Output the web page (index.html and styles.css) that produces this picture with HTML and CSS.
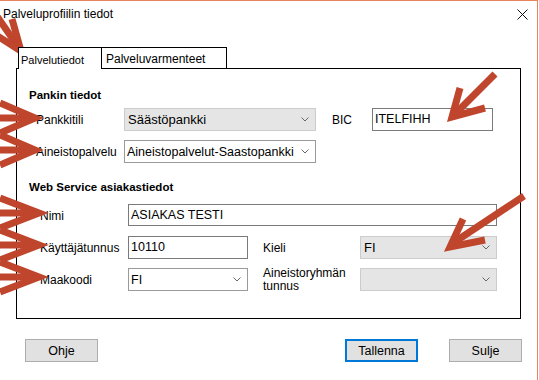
FILE: index.html
```html
<!DOCTYPE html>
<html lang="fi">
<head>
  <meta charset="UTF-8" />
  <meta name="viewport" content="width=device-width, initial-scale=1.0" />
  <title>Palveluprofiilin tiedot</title>
  <link rel="stylesheet" href="styles.css">
</head>
<body>
  <div class="window">
    <div class="titlebar">
      <span class="title">Palveluprofiilin tiedot</span>
      <svg class="close" width="11" height="11" viewBox="0 0 11 11">
        <path d="M0.5 0.5 L10.5 10.5 M10.5 0.5 L0.5 10.5" stroke="#111" stroke-width="1" fill="none" />
      </svg>
    </div>

    <div class="tabs">
      <div class="tab active">Palvelutiedot</div>
      <div class="tab">Palveluvarmenteet</div>
    </div>

    <div class="panel">
      <div class="heading">Pankin tiedot</div>
      <div class="bank-grid">
        <label>Pankkitili</label>
        <div class="combo disabled">
          <span>Säästöpankki</span>
          <svg class="chev" width="8" height="5" viewBox="0 0 8 5"><path d="M0.5 0.5 L4 4 L7.5 0.5" /></svg>
        </div>
        <label class="bic">BIC</label>
        <div class="field">ITELFIHH</div>

        <label>Aineistopalvelu</label>
        <div class="combo edit">
          <span>Aineistopalvelut-Saastopankki</span>
          <svg class="chev" width="8" height="5" viewBox="0 0 8 5"><path d="M0.5 0.5 L4 4 L7.5 0.5" /></svg>
        </div>
      </div>

      <div class="heading second">Web Service asiakastiedot</div>
      <div class="ws-grid">
        <label>Nimi</label>
        <div class="field wide">ASIAKAS TESTI</div>

        <label>Käyttäjätunnus</label>
        <div class="field">10110</div>
        <label class="side">Kieli</label>
        <div class="combo disabled">
          <span>FI</span>
          <svg class="chev" width="8" height="5" viewBox="0 0 8 5"><path d="M0.5 0.5 L4 4 L7.5 0.5" /></svg>
        </div>

        <label>Maakoodi</label>
        <div class="combo edit">
          <span>FI</span>
          <svg class="chev" width="8" height="5" viewBox="0 0 8 5"><path d="M0.5 0.5 L4 4 L7.5 0.5" /></svg>
        </div>
        <label class="side two-line">Aineistoryhmän<br>tunnus</label>
        <div class="combo disabled">
          <span></span>
          <svg class="chev" width="8" height="5" viewBox="0 0 8 5"><path d="M0.5 0.5 L4 4 L7.5 0.5" /></svg>
        </div>
      </div>
    </div>

    <div class="buttons">
      <button class="btn">Ohje</button>
      <button class="btn default">Tallenna</button>
      <button class="btn">Sulje</button>
    </div>

    <!-- annotation arrows drawn over the dialog -->
    <svg class="marks" width="539" height="380" viewBox="0 0 539 380">
      <g stroke="#c0452d" stroke-width="7" fill="none" stroke-linejoin="miter">
        <path d="M-6 12 L19 48" />
        <path d="M12 19 L21 51 L-4 35" />

        <path d="M495 74 L455 114" />
        <path d="M460 88 L452 117 L485 108" />

        <path d="M524 196 L453 243" />
        <path d="M463 219 L450 247 L485 240" />

        <path d="M-8 118 L31 118" />
        <path d="M0 103 L35 118 L0 133" />

        <path d="M-8 150 L31 150" />
        <path d="M0 135 L35 150 L0 165" />

        <path d="M-8 213 L35 213" />
        <path d="M0 198 L39 213 L0 228" />

        <path d="M-8 245 L35 245" />
        <path d="M0 230 L39 245 L0 260" />

        <path d="M-8 277 L35 277" />
        <path d="M0 262 L39 277 L0 292" />
      </g>
    </svg>
  </div>
</body>
</html>
```

FILE: styles.css
```css
body {
  margin: 0;
  background: #fff;
  font-family: "Liberation Sans", Arial, sans-serif;
  font-size: 12px;
  color: #000;
}
.window {
  position: relative;
  width: 538px;
  height: 380px;
  box-sizing: border-box;
  border-top: 1px solid #e8845c;
  border-right: 1px solid #e8845c;
  overflow: hidden;
}
.titlebar {
  height: 26px;
  display: flex;
  align-items: center;
  justify-content: space-between;
  padding: 0 9px 0 3px;
}
.title {
  font-size: 12px;
  line-height: 14px;
}
.close {
  display: block;
}

/* Tabs */
.tabs {
  position: relative;
  z-index: 1;
  display: flex;
  align-items: flex-start;
  margin: 20px 0 -1px 18px;
  height: 22px;
}
.tab {
  box-sizing: border-box;
  height: 21px;
  width: 125px;
  padding: 4px 0 0 4px;
  line-height: 14px;
  font-size: 12px;
  border-top: 1px solid #000;
  border-right: 1px solid #000;
  background: #fff;
}
.tab.active {
  width: 84px;
  height: 22px;
  padding: 6px 0 0 2px;
  font-size: 11px;
  line-height: 13px;
  border-left: 1px solid #000;
}

/* Panel */
.panel {
  box-sizing: border-box;
  margin-left: 16px;
  width: 505px;
  height: 251px;
  border: 1px solid #000;
  padding: 19px 0 0 12px;
}
.heading {
  font-weight: bold;
  font-size: 11.5px;
  line-height: 14px;
}
.heading.second {
  margin-top: 17px;
}
label {
  align-self: center;
  white-space: nowrap;
}
.bank-grid {
  display: grid;
  grid-template-columns: 88px 192px 56px 121px;
  grid-auto-rows: 23px;
  row-gap: 9px;
  margin: 6px 0 0 7px;
}
.bank-grid .bic {
  padding-left: 16px;
}
.ws-grid {
  display: grid;
  grid-template-columns: 88px 120px 15px 97px 137px;
  grid-auto-rows: 23px;
  row-gap: 9px;
  margin: 10px 0 0 11px;
}
.ws-grid .side {
  grid-column: 4;
}
.ws-grid .two-line {
  align-self: start;
  line-height: 13px;
  margin-top: -1px;
}
.ws-grid .field,
.ws-grid .combo {
  grid-column: 2;
}
.ws-grid .side + .field,
.ws-grid .side + .combo {
  grid-column: 5;
}
.ws-grid .field.wide {
  grid-column: 2 / 6;
  height: 22px;
}

/* Controls */
.field {
  box-sizing: border-box;
  border: 1px solid #7a7a7a;
  padding: 0 2px;
  font-size: 12.5px;
  line-height: 21px;
  background: #fff;
}
.combo {
  box-sizing: border-box;
  display: flex;
  align-items: center;
  justify-content: space-between;
  padding: 0 6px 0 3px;
  font-size: 13px;
  border: 1px solid #adadad;
  background: #fff;
}
.combo span {
  white-space: nowrap;
  overflow: hidden;
}
.combo.edit {
  border-color: #9a9a9a;
  padding-left: 2px;
  font-size: 12.5px;
}
.combo.disabled {
  background: #e5e5e5;
  border-color: #cccccc;
}
.chev {
  flex: none;
}
.chev path {
  stroke: #666;
  stroke-width: 1;
  fill: none;
}

/* Buttons */
.buttons {
  display: flex;
  gap: 31px;
  margin-top: 20px;
  padding: 0 15px 0 25px;
}
.btn {
  box-sizing: border-box;
  width: 73px;
  height: 23px;
  background: #e1e1e1;
  border: 1px solid #adadad;
  font-family: inherit;
  font-size: 12.5px;
  color: #000;
  padding: 0;
}
.btn.default {
  margin-left: auto;
  border: 2px solid #0078d7;
}

.marks {
  position: absolute;
  left: 0;
  top: -1px;
  pointer-events: none;
}
```
